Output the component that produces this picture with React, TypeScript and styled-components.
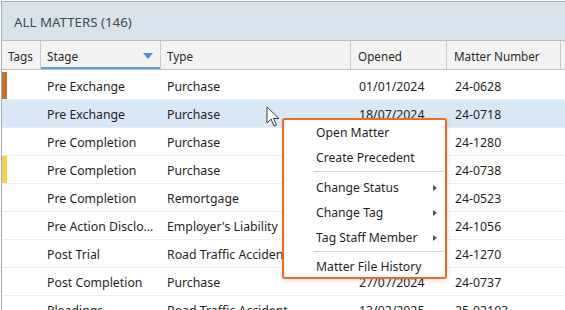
import { FC } from 'react'
import styled, { createGlobalStyle } from 'styled-components'

interface Matter {
  tag?: string
  stage: string
  type: string
  opened: string
  number: string
  selected?: boolean
}

const matters: Matter[] = [
  { tag: '#c0722f', stage: 'Pre Exchange', type: 'Purchase', opened: '01/01/2024', number: '24-0628' },
  { stage: 'Pre Exchange', type: 'Purchase', opened: '18/07/2024', number: '24-0718', selected: true },
  { stage: 'Pre Completion', type: 'Purchase', opened: '02/08/2024', number: '24-1280' },
  { tag: '#f7cf4d', stage: 'Pre Completion', type: 'Purchase', opened: '19/07/2024', number: '24-0738' },
  { stage: 'Pre Completion', type: 'Remortgage', opened: '11/06/2024', number: '24-0523' },
  { stage: 'Pre Action Disclosure', type: "Employer's Liability", opened: '20/09/2024', number: '24-1056' },
  { stage: 'Post Trial', type: 'Road Traffic Accident', opened: '30/10/2024', number: '24-1270' },
  { stage: 'Post Completion', type: 'Purchase', opened: '27/07/2024', number: '24-0737' },
  { stage: 'Pleadings', type: 'Road Traffic Accident', opened: '13/02/2025', number: '25-02103' },
]

const menu = [
  { label: 'Open Matter' },
  { label: 'Create Precedent' },
  { separator: true },
  { label: 'Change Status', sub: true },
  { label: 'Change Tag', sub: true },
  { label: 'Tag Staff Member', sub: true },
  { separator: true },
  { label: 'Matter File History', last: true },
]

const GlobalStyle = createGlobalStyle`
  html, body {
    margin: 0;
    padding: 0;
    background: #ffffff;
    overflow: hidden;
  }
  body {
    font-family: 'Noto Sans', 'Open Sans', sans-serif;
    color: #1f1f1f;
  }
`

const Page = styled.div`
  width: 565px;
  height: 310px;
  padding: 1px 0 0 1px;
  box-sizing: border-box;
  position: relative;
  overflow: hidden;
`

const Frame = styled.div`
  border-top: 1px solid #a8adb2;
  border-left: 1px solid #a8adb2;
  height: 100%;
`

const TitleBar = styled.div`
  height: 39px;
  background: #d9e2ea;
  border-bottom: 1px solid #b9bec3;
  display: flex;
  align-items: center;
  padding: 1px 0 0 12px;
  box-sizing: border-box;
  font-size: 13.3px;
  color: #424a52;
`

const Grid = styled.div`
  display: grid;
  grid-template-columns: 39px 120px 190px 96px 114px 1fr;
`

const HeaderRow = styled(Grid)`
  height: 28px;
  background: #f3f3f3;
  border-bottom: 1px solid #c3c3c3;
`

const HeaderCell = styled.div<{ $sorted?: boolean; $pad?: number }>`
  display: flex;
  align-items: center;
  justify-content: space-between;
  padding: 1px 6px 0 ${(p) => p.$pad ?? 6}px;
  border-right: 1px solid #cbcbcb;
  font-size: 11.7px;
  color: #2a2a2a;
  ${(p) => (p.$sorted ? 'box-shadow: inset 0 -2px 0 #5d9ce0;' : '')}
`

const SortArrow = styled.span`
  width: 0;
  height: 0;
  border-left: 5px solid transparent;
  border-right: 5px solid transparent;
  border-top: 6px solid #4a8fdc;
  margin-right: 1px;
`

const Body = styled.div`
  padding-top: 2px;
`

const Row = styled(Grid)<{ $selected?: boolean }>`
  height: 27px;
  border-bottom: 1px solid #ededed;
  background: ${(p) => (p.$selected ? '#d9e8f6' : '#ffffff')};
`

const Cell = styled.div<{ $ellipsis?: boolean; $pad?: number }>`
  display: flex;
  align-items: center;
  padding: 1px 6px 0 ${(p) => p.$pad ?? 6}px;
  font-size: 12.3px;
  color: #1f1f1f;
  white-space: nowrap;
  overflow: hidden;
  ${(p) =>
    p.$ellipsis
      ? `
    display: block;
    line-height: 27px;
    text-overflow: ellipsis;
  `
      : ''}
`

const TagCell = styled.div`
  display: flex;
`

const TagBar = styled.span<{ $color: string }>`
  width: 5px;
  height: 100%;
  background: ${(p) => p.$color};
`

const Menu = styled.div`
  position: absolute;
  left: 282px;
  top: 118px;
  width: 161px;
  background: #ffffff;
  border: 2px solid #ef6b24;
  border-radius: 3px;
  box-shadow: 1px 2px 4px rgba(0, 0, 0, 0.12);
`

const MenuItem = styled.div<{ $last?: boolean }>`
  height: ${(p) => (p.$last ? 22 : 25)}px;
  display: flex;
  align-items: center;
  justify-content: space-between;
  padding: 0 8px 0 32px;
  font-size: 12.2px;
  color: #1f1f1f;
`

const SubArrow = styled.span`
  width: 0;
  height: 0;
  border-top: 3.5px solid transparent;
  border-bottom: 3.5px solid transparent;
  border-left: 4px solid #555555;
`

const Separator = styled.div`
  height: 1px;
  background: #d6d6d6;
  margin: 1px 0 3px 30px;
`

const Cursor = styled.svg`
  position: absolute;
  left: 266px;
  top: 106px;
`

const App: FC = () => {
  return (
    <>
      <GlobalStyle />
      <Page>
        <Frame>
          <TitleBar>ALL MATTERS (146)</TitleBar>
          <HeaderRow>
            <HeaderCell>Tags</HeaderCell>
            <HeaderCell $sorted>
              Stage
              <SortArrow />
            </HeaderCell>
            <HeaderCell>Type</HeaderCell>
            <HeaderCell $pad={7}>Opened</HeaderCell>
            <HeaderCell $pad={7}>Matter Number</HeaderCell>
            <HeaderCell />
          </HeaderRow>
          <Body>
            {matters.map((m, i) => (
              <Row key={i} $selected={m.selected}>
                <TagCell>{m.tag && <TagBar $color={m.tag} />}</TagCell>
                <Cell $ellipsis>{m.stage}</Cell>
                <Cell>{m.type}</Cell>
                <Cell $pad={8}>{m.opened}</Cell>
                <Cell $pad={8}>{m.number}</Cell>
                <Cell />
              </Row>
            ))}
          </Body>
        </Frame>

        <Menu>
          {menu.map((item, i) =>
            item.separator ? (
              <Separator key={i} />
            ) : (
              <MenuItem key={i} $last={item.last}>
                {item.label}
                {item.sub && <SubArrow />}
              </MenuItem>
            ),
          )}
        </Menu>

        <Cursor width="14" height="22" viewBox="0 0 14 22">
          <path
            d="M1 1 L1 17 L5 13 L8 20 L10.5 19 L7.5 12.5 L13 12.5 Z"
            fill="#ffffff"
            stroke="#3a3a3a"
            strokeWidth="1"
            strokeLinejoin="round"
          />
        </Cursor>
      </Page>
    </>
  )
}

export default App
